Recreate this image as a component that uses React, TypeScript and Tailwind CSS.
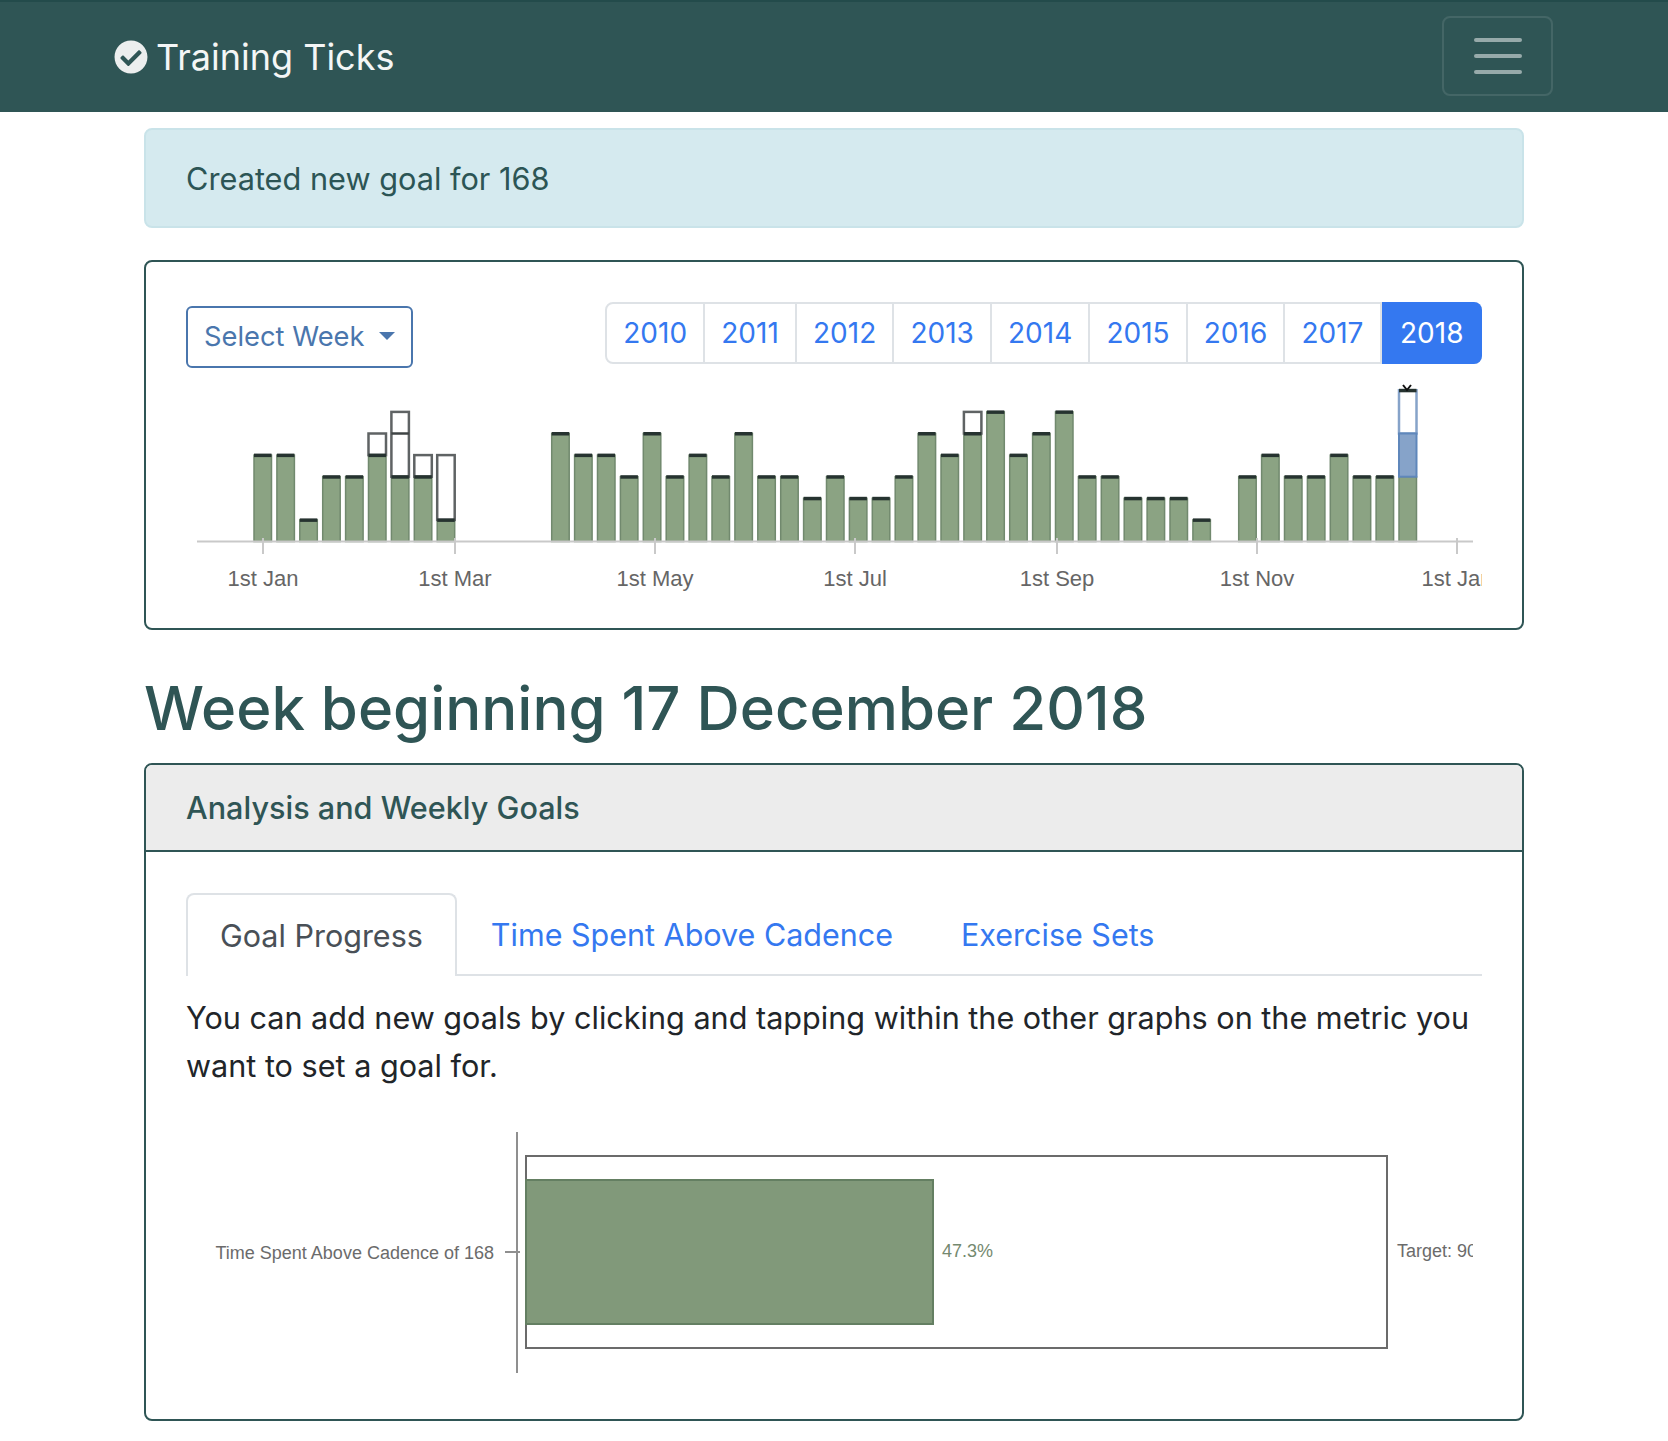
import React from 'react';
import { FaCheckCircle } from 'react-icons/fa';

// week bars: v = done, goal = outline top, mid = extra line inside outline
interface Bar {
  i: number;
  v: number;
  goal?: number;
  mid?: number;
}

const plain: [number, number][] = [
  [0, 4], [1, 4], [2, 1], [3, 3], [4, 3],
  [13, 5], [14, 4], [15, 4], [16, 3], [17, 5], [18, 3], [19, 4], [20, 3], [21, 5], [22, 3], [23, 3],
  [24, 2], [25, 3], [26, 2], [27, 2], [28, 3], [29, 5], [30, 4], [32, 6], [33, 4], [34, 5], [35, 6],
  [36, 3], [37, 3], [38, 2], [39, 2], [40, 2], [41, 1],
  [43, 3], [44, 4], [45, 3], [46, 3], [47, 4], [48, 3], [49, 3],
];

const bars: Bar[] = [
  ...plain.map(([i, v]) => ({ i, v })),
  { i: 5, v: 4, goal: 5 },
  { i: 6, v: 3, goal: 6, mid: 5 },
  { i: 7, v: 3, goal: 4 },
  { i: 8, v: 1, goal: 4 },
  { i: 31, v: 5, goal: 6 },
];

const BASE = 540.5;
const UNIT = 21.6;
const barX = (i: number) => 254 + i * 22.9;
const barY = (v: number) => BASE - v * UNIT;

const ticks = [
  { x: 263, label: '1st Jan' },
  { x: 455, label: '1st Mar' },
  { x: 655, label: '1st May' },
  { x: 855, label: '1st Jul' },
  { x: 1057, label: '1st Sep' },
  { x: 1257, label: '1st Nov' },
  { x: 1457, label: '1st Jan' },
];

const years = ['2010', '2011', '2012', '2013', '2014', '2015', '2016', '2017', '2018'];

const WeekChart: React.FC = () => (
  <svg viewBox="186 364 1296 230" width={1296} height={230} className="block font-['Liberation_Sans',sans-serif]">
    {bars.map((b) => (
      <g key={b.i}>
        <rect x={barX(b.i)} y={barY(b.v)} width={17.5} height={BASE - barY(b.v)} fill="#8ba383" stroke="#71896e" strokeWidth={1.5} />
        {b.goal ? (
          <rect x={barX(b.i)} y={barY(b.goal)} width={17.5} height={barY(b.v) - barY(b.goal)} fill="#fff" stroke="#5f6364" strokeWidth={2.5} />
        ) : null}
        {b.mid ? <line x1={barX(b.i)} x2={barX(b.i) + 17.5} y1={barY(b.mid)} y2={barY(b.mid)} stroke="#3f4445" strokeWidth={2.5} /> : null}
        <rect x={barX(b.i)} y={barY(b.v) - 1.5} width={17.5} height={3.5} fill="#263330" />
      </g>
    ))}

    {/* current week */}
    <rect x={barX(50)} y={barY(3)} width={17.5} height={BASE - barY(3)} fill="#8ba383" stroke="#71896e" strokeWidth={1.5} />
    <rect x={barX(50)} y={barY(7)} width={17.5} height={barY(5) - barY(7)} fill="#fff" stroke="#86a3c9" strokeWidth={2.5} />
    <rect x={barX(50)} y={barY(5)} width={17.5} height={barY(3) - barY(5)} fill="#86a3c9" stroke="#5f87bb" strokeWidth={2} />
    <rect x={barX(50)} y={barY(7) - 1.5} width={17.5} height={3.5} fill="#263330" />
    <path d="M1403 384 L1407 389 L1411 384" fill="none" stroke="#111" strokeWidth={2} />

    <line x1={197} x2={1473} y1={540.5} y2={540.5} stroke="#c9c9c9" strokeWidth={2} />
    {ticks.map((t) => (
      <g key={t.x}>
        <line x1={t.x} x2={t.x} y1={537} y2={553} stroke="#c9c9c9" strokeWidth={2} />
        <text x={t.x} y={584.5} textAnchor="middle" fontSize={22} fill="#666">
          {t.label}
        </text>
      </g>
    ))}
  </svg>
);

const GoalChart: React.FC = () => (
  <svg viewBox="186 1110 1287 268" width={1287} height={268} className="block font-['Liberation_Sans',sans-serif]">
    <line x1={517} x2={517} y1={1131} y2={1372} stroke="#8f8f8f" strokeWidth={2} />
    <line x1={505} x2={520} y1={1251} y2={1251} stroke="#8f8f8f" strokeWidth={2} />
    <rect x={526} y={1155} width={861} height={192} fill="#fff" stroke="#6b6b6b" strokeWidth={2} />
    <rect x={526} y={1179} width={407} height={144} fill="#81997a" stroke="#647f62" strokeWidth={2} />
    <text x={494} y={1258} textAnchor="end" fontSize={18} fill="#6b6b6b">
      Time Spent Above Cadence of 168
    </text>
    <text x={942} y={1256} fontSize={18} fill="#74896f">
      47.3%
    </text>
    <text x={1397} y={1256} fontSize={18} fill="#6b6b6b">
      Target: 90
    </text>
  </svg>
);

const App: React.FC = () => {
  return (
    <div className="min-h-[1441px] bg-white font-['Inter',sans-serif] text-[#212529]">
      {/* Navbar */}
      <nav className="flex h-[112px] items-center justify-between border-t-2 border-[#234b4b] bg-[#2f5555] pl-[114px] pr-[115px]">
        <a className="flex items-center gap-[8px] text-[36px] text-[#f4f6f6]">
          <FaCheckCircle className="h-[34px] w-[34px] text-[#eceeee]" />
          Training Ticks
        </a>
        <button className="-mt-[3px] flex h-[80px] w-[111px] flex-col items-center justify-center gap-[12px] rounded-lg border-2 border-white/10">
          <span className="h-[4px] w-[48px] rounded-full bg-white/50" />
          <span className="h-[4px] w-[48px] rounded-full bg-white/50" />
          <span className="h-[4px] w-[48px] rounded-full bg-white/50" />
        </button>
      </nav>

      <main className="mx-[144px] pt-[16px]">
        <div className="flex h-[100px] items-center rounded-lg border-2 border-[#c9e3e9] bg-[#d5eaef] px-[40px] pt-[2px] text-[30.7px] text-[#2c5555]">
          Created new goal for 168
        </div>

        {/* Year chart card */}
        <section className="mt-[32px] h-[370px] rounded-lg border-2 border-[#2f5555] px-[40px] pt-[40px]">
          <div className="flex h-[63px] items-start justify-between">
            <button className="mt-[4px] flex h-[62px] w-[227px] items-center gap-[15px] rounded-md border-2 border-[#4a76ad] pl-[16px] text-[27.3px] text-[#4a76ad]">
              Select Week
              <span className="-mt-[2px] h-0 w-0 border-x-[8px] border-t-[8px] border-x-transparent border-t-[#4a76ad]" />
            </button>
            <div className="flex h-[62px] rounded-lg border-2 border-[#dee2e6] text-[28px] text-[#3478f0]">
              {years.map((y) =>
                y === '2018' ? (
                  <span key={y} className="-my-[2px] -mr-[2px] flex items-center rounded-r-lg bg-[#3478f0] px-[18.5px] text-white">
                    {y}
                  </span>
                ) : (
                  <span key={y} className="flex items-center border-r-2 border-[#dee2e6] px-[16.1px]">
                    {y}
                  </span>
                ),
              )}
            </div>
          </div>
          <WeekChart />
        </section>

        <h1 className="mt-[31px] h-[94px] text-[59.9px] font-medium leading-[94px] text-[#2f5555]">Week beginning 17 December 2018</h1>

        {/* Analysis card */}
        <section className="mt-[8px] h-[658px] overflow-hidden rounded-lg border-2 border-[#2f5555]">
          <header className="flex h-[87px] items-center border-b-2 border-[#2f5555] bg-[#ececec] px-[40px] pt-[1px] text-[30.6px] font-medium text-[#2f5555]">
            Analysis and Weekly Goals
          </header>
          <div className="px-[40px] pt-[41px]">
            <div className="flex h-[83px] border-b-2 border-[#dee2e6] text-[30.5px] text-[#3478f0]">
              <span className="-mb-[2px] flex items-center rounded-t-lg border-2 border-b-0 border-[#dee2e6] bg-white px-[32px] pt-[1px] text-[#495057]">
                Goal Progress
              </span>
              <span className="-mb-[2px] flex items-center border-2 border-transparent px-[32px] pt-[1px]">Time Spent Above Cadence</span>
              <span className="-mb-[2px] flex items-center border-2 border-transparent px-[32px] pt-[1px]">Exercise Sets</span>
            </div>
            <p className="mt-[18px] text-[30.6px] leading-[48px]">
              You can add new goals by clicking and tapping within the other graphs on the metric you want to set a goal for.
            </p>
            <div className="mt-[21px]">
              <GoalChart />
            </div>
          </div>
        </section>
      </main>
    </div>
  );
};

export default App;
